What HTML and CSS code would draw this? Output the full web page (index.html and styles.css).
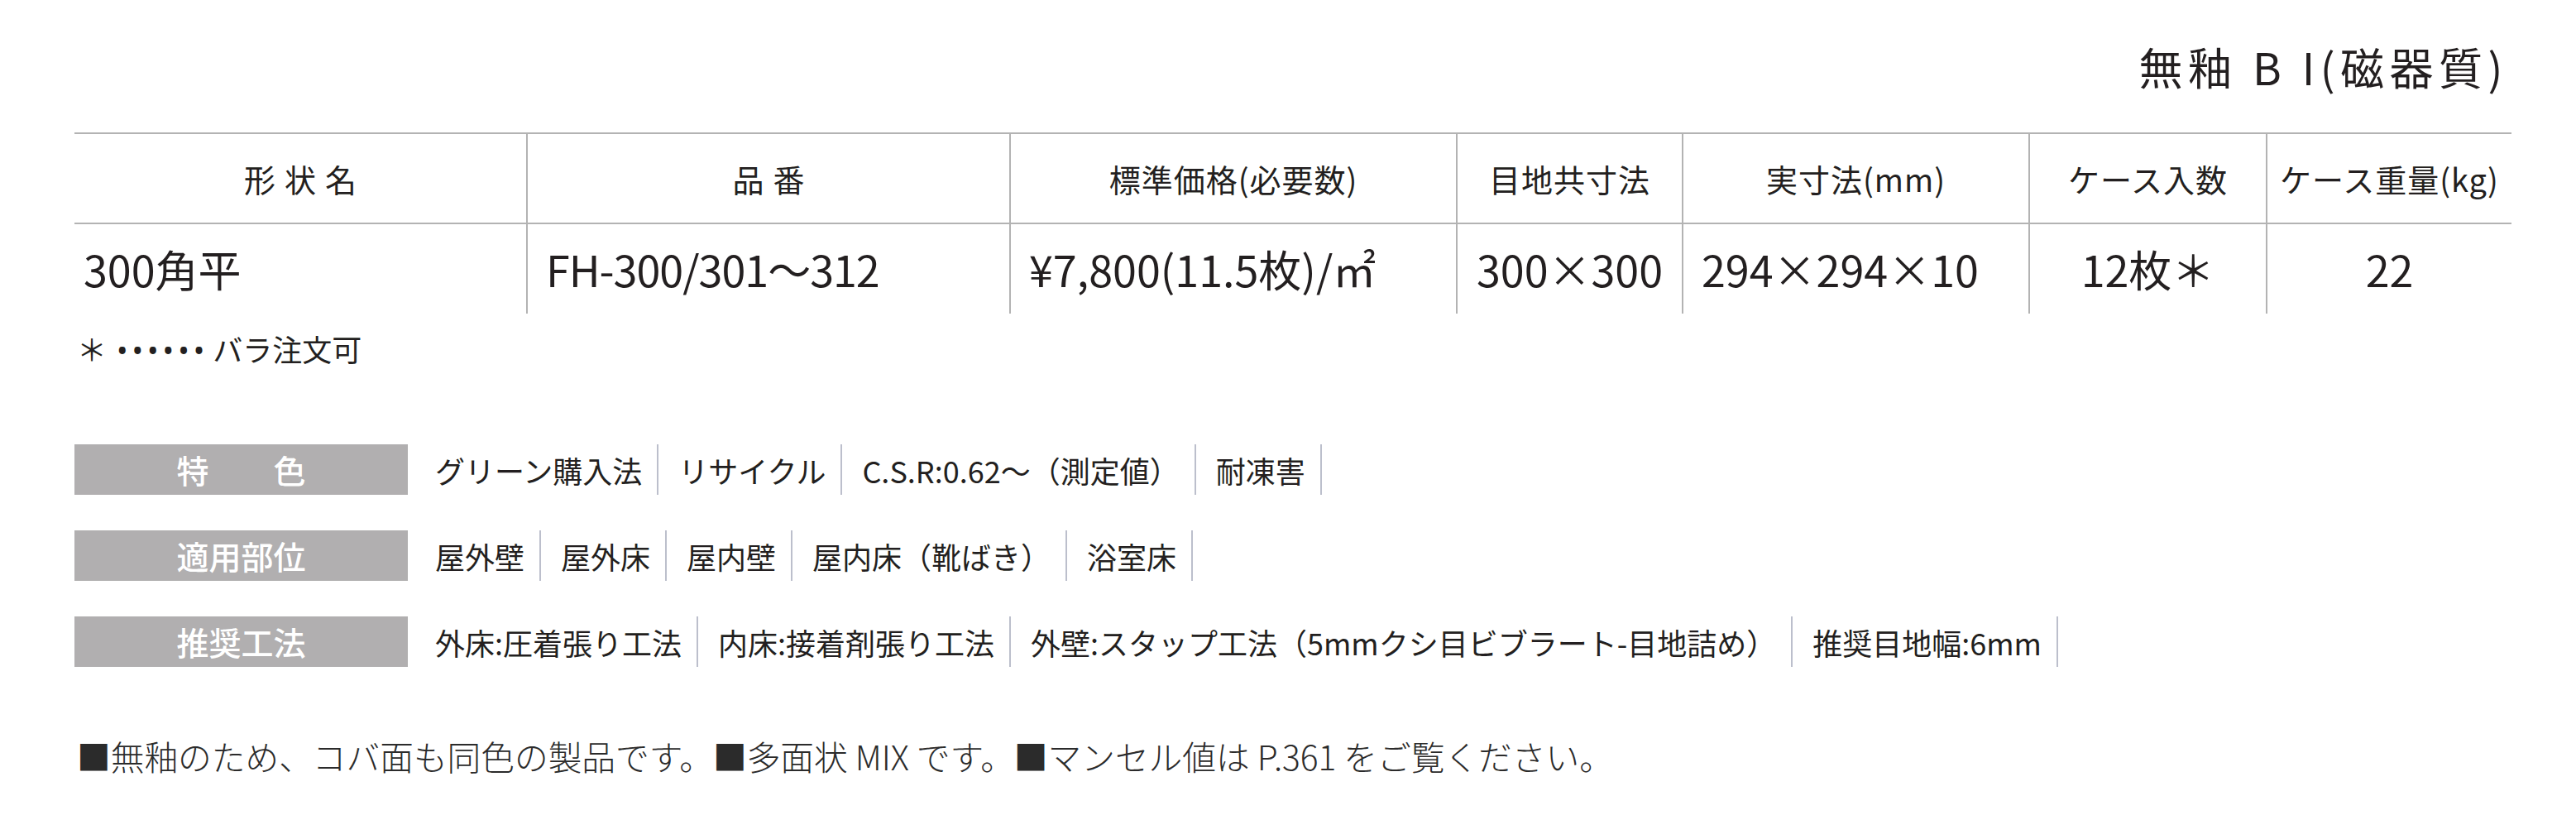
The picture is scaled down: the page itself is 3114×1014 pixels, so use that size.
FILE: index.html
```html
<!DOCTYPE html>
<html lang="ja">
<head>
<meta charset="utf-8">
<title>無釉 B I(磁器質)</title>
<link rel="stylesheet" href="styles.css">
</head>
<body>
<div class="page">
  <div class="title">無釉 B I(磁器質)</div>

  <div class="spec">
    <div class="hd c1"><span class="spaced">形状名</span></div>
    <div class="hd"><span class="spaced">品番</span></div>
    <div class="hd">標準価格(必要数)</div>
    <div class="hd">目地共寸法</div>
    <div class="hd">実寸法(mm)</div>
    <div class="hd">ケース入数</div>
    <div class="hd">ケース重量(kg)</div>

    <div class="bd c1 left">300角平</div>
    <div class="bd left narrow">FH-300/301〜312</div>
    <div class="bd left">¥7,800(11.5枚)/㎡</div>
    <div class="bd">300×300</div>
    <div class="bd left">294×294×10</div>
    <div class="bd">12枚＊</div>
    <div class="bd">22</div>
  </div>

  <div class="note">＊<span class="dots">••••••</span>バラ注文可</div>

  <div class="props">
    <div class="prop">
      <div class="label">特　　色</div>
      <ul class="items">
        <li>グリーン購入法</li>
        <li>リサイクル</li>
        <li>C.S.R:0.62〜（測定値）</li>
        <li>耐凍害</li>
      </ul>
    </div>
    <div class="prop">
      <div class="label">適用部位</div>
      <ul class="items">
        <li>屋外壁</li>
        <li>屋外床</li>
        <li>屋内壁</li>
        <li>屋内床（靴ばき）</li>
        <li>浴室床</li>
      </ul>
    </div>
    <div class="prop">
      <div class="label">推奨工法</div>
      <ul class="items">
        <li>外床:圧着張り工法</li>
        <li>内床:接着剤張り工法</li>
        <li>外壁:スタップ工法（5mmクシ目ビブラート-目地詰め）</li>
        <li>推奨目地幅:6mm</li>
      </ul>
    </div>
  </div>

  <p class="foot">■無釉のため、コバ面も同色の製品です。■多面状 MIX です。■マンセル値は P.361 をご覧ください。</p>
</div>
</body>
</html>
```

FILE: styles.css
```css
html, body {
  margin: 0;
  padding: 0;
  background: #ffffff;
}

body {
  font-family: "Noto Sans CJK JP", "Noto Sans", sans-serif;
  color: #231f20;
}

.page {
  width: 2946px;
  padding-left: 90px;
}

.title {
  height: 160px;
  display: flex;
  align-items: center;
  justify-content: flex-end;
  font-size: 53px;
  line-height: 1;
  letter-spacing: 6.5px;
  padding-right: 4px;
  white-space: pre;
}

.spec {
  display: grid;
  grid-template-columns: 546px 584px 540px 273px 419px 287px 297px;
  border-top: 2px solid #b3b3b3;
}

.hd, .bd {
  display: flex;
  align-items: center;
  justify-content: center;
  border-left: 2px solid #b3b3b3;
  white-space: nowrap;
}

.hd {
  height: 107px;
  font-size: 38px;
  line-height: 1;
  letter-spacing: 1px;
  border-bottom: 2px solid #b3b3b3;
}

.bd {
  height: 108px;
  font-size: 52px;
  line-height: 1;
}

.c1 {
  border-left: none;
}

.left {
  justify-content: flex-start;
  padding-left: 22px;
}

.bd.c1 {
  padding-left: 11px;
}

.narrow {
  letter-spacing: -1px;
}

.spaced {
  letter-spacing: 11px;
  margin-right: -11px;
}

.note {
  margin-top: 24px;
  font-size: 36px;
  line-height: 1;
  padding-left: 3px;
  white-space: pre;
}

.dots {
  font-family: "Noto Sans", sans-serif;
  letter-spacing: 5px;
  margin-left: 12px;
  margin-right: 5px;
}

.props {
  margin-top: 95px;
  display: flex;
  flex-direction: column;
  gap: 43px;
}

.prop {
  display: flex;
  height: 61px;
}

.label {
  width: 403px;
  flex: none;
  background: #b1afb0;
  color: #ffffff;
  font-size: 39px;
  line-height: 61px;
  text-align: center;
  font-weight: 500;
}

.items {
  list-style: none;
  margin: 0 0 0 33px;
  padding: 0;
  display: flex;
}

.items li {
  display: flex;
  align-items: center;
  padding: 0 18px 0 24px;
  border-right: 2px solid #bcbfcc;
  font-size: 36px;
  line-height: 1;
  white-space: nowrap;
}

.items li:first-child {
  padding-left: 0;
}

.foot {
  margin: 88px 0 0 0;
  font-size: 40.7px;
  line-height: 1;
  font-weight: 300;
  color: #2b2b2b;
  padding-left: 3px;
  white-space: nowrap;
}
```
